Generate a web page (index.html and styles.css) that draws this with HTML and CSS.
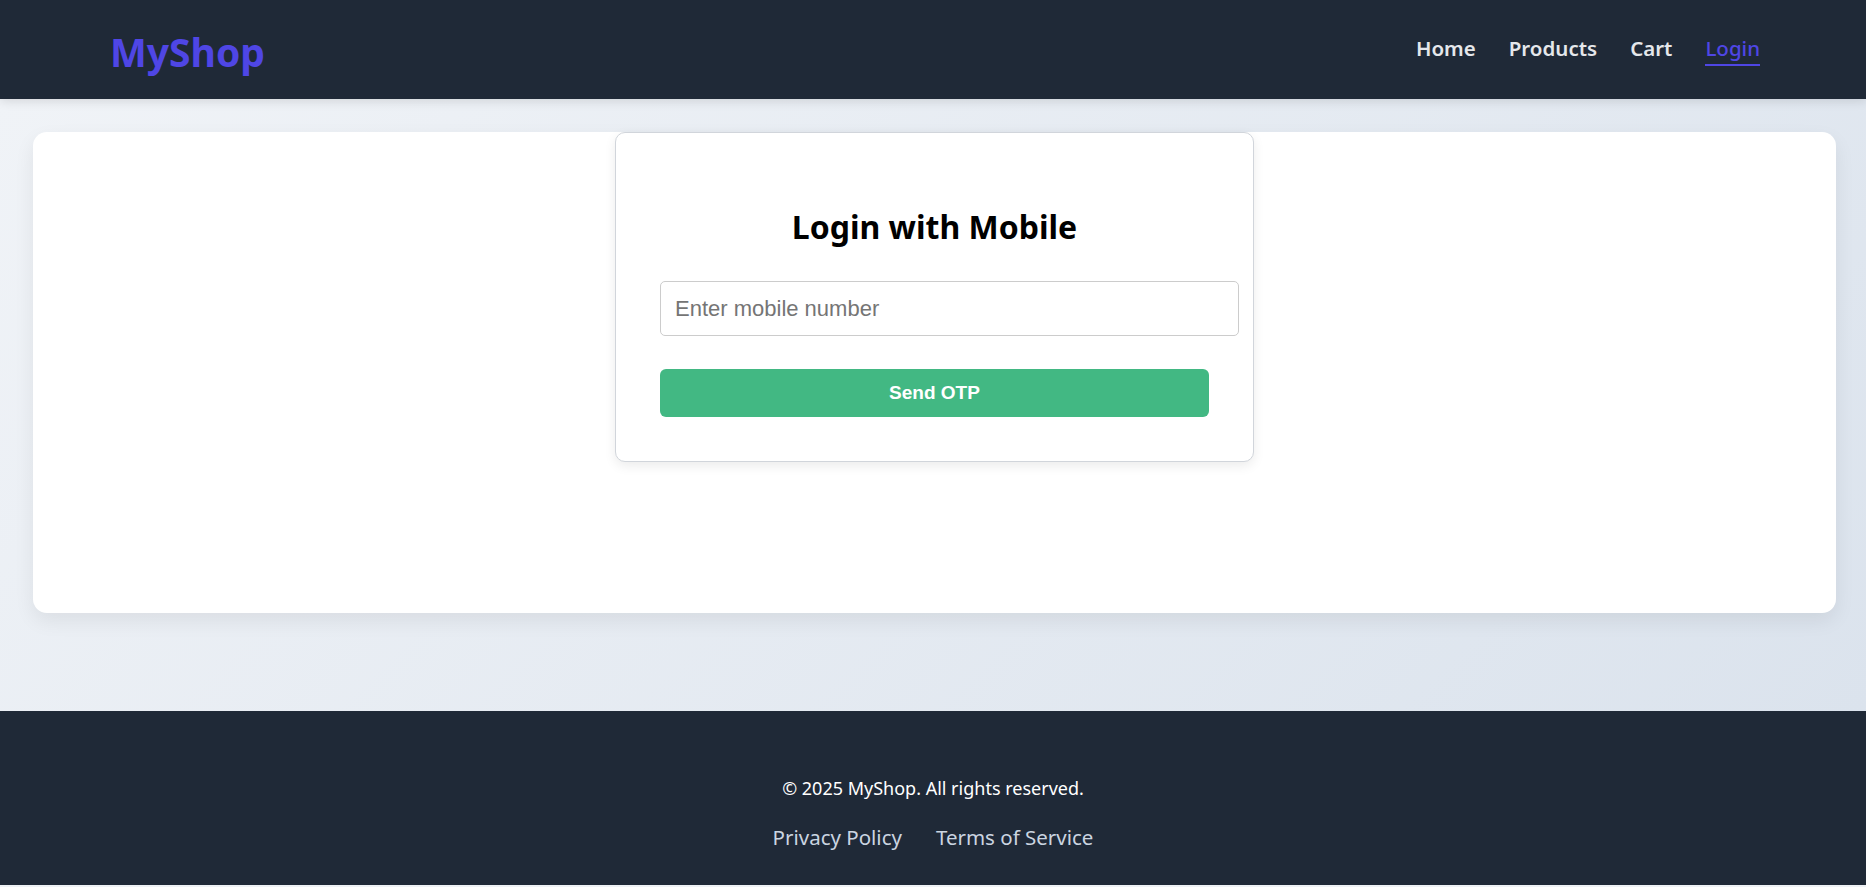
FILE: index.html
```html
<!DOCTYPE html>
<html lang="en">
<head>
<meta charset="utf-8">
<title>MyShop - Login</title>
<link rel="stylesheet" href="styles.css">
</head>
<body>
<header class="topbar">
  <div class="logo">MyShop</div>
  <nav class="nav">
    <a class="nav-link" href="#">Home</a>
    <a class="nav-link" href="#">Products</a>
    <a class="nav-link" href="#">Cart</a>
    <a class="nav-link active" href="#">Login</a>
  </nav>
</header>
<main class="main">
  <section class="panel">
    <div class="card">
      <h2 class="card-title">Login with Mobile</h2>
      <input class="phone-input" type="text" placeholder="Enter mobile number">
      <button class="otp-btn" type="button">Send OTP</button>
    </div>
  </section>
</main>
<footer class="footer">
  <p class="copy">© 2025 MyShop. All rights reserved.</p>
  <div class="footer-links">
    <a class="footer-link" href="#">Privacy Policy</a>
    <a class="footer-link" href="#">Terms of Service</a>
  </div>
</footer>
</body>
</html>
```
FILE: styles.css
```css
body {
  margin: 0;
  background: #eef1f5;
  font-family: "Noto Sans", "Open Sans", sans-serif;
}

.topbar {
  height: 99px;
  background: #1f2937;
  display: flex;
  align-items: center;
  justify-content: space-between;
  padding: 0 106px 0 110px;
  box-shadow: 0 2px 10px rgba(0, 0, 0, 0.12);
  position: relative;
  z-index: 1;
}

.logo {
  font-size: 39px;
  font-weight: 700;
  color: #4f46e5;
  line-height: 1;
  padding-top: 4px;
}

.nav {
  display: flex;
  gap: 33px;
  align-items: center;
}

.nav-link {
  color: #e5e7eb;
  text-decoration: none;
  font-size: 20.5px;
  font-weight: 600;
  padding-bottom: 2px;
  border-bottom: 2px solid transparent;
}

.nav-link.active {
  color: #4f46e5;
  font-weight: 500;
  border-bottom-color: #4f46e5;
}

.main {
  padding: 33px 30px 98px 33px;
  background: linear-gradient(135deg, #f0f3f7 0%, #dbe3ed 100%);
}

.panel {
  background: #fff;
  border-radius: 14px;
  height: 481px;
  box-shadow: 0 8px 20px rgba(0, 0, 0, 0.07);
  display: flex;
  justify-content: center;
  align-items: flex-start;
}

.card {
  width: 549px;
  padding: 44px;
  background: #fff;
  border: 1px solid #d1d5db;
  border-radius: 10px;
  box-shadow: 0 4px 12px rgba(0, 0, 0, 0.08);
}

.card-title {
  margin: 28px 0 32px;
  font-size: 32px;
  line-height: 44px;
  font-weight: 700;
  color: #000;
  text-align: center;
}

.phone-input {
  display: block;
  width: 100%;
  margin: 0;
  padding: 14px 14px 13px;
  font-family: "Liberation Sans", Arial, sans-serif;
  font-size: 22px;
  border: 1px solid #cccccc;
  border-radius: 5px;
  color: #333;
  outline: none;
}

.phone-input::placeholder {
  color: #757575;
}

.otp-btn {
  display: block;
  width: 100%;
  height: 48px;
  margin-top: 33px;
  border: none;
  border-radius: 6px;
  background: #42b883;
  color: #fff;
  font-family: "Liberation Sans", Arial, sans-serif;
  font-size: 19px;
  font-weight: 700;
}

.footer {
  background: #1f2937;
  padding: 64px 0 33px;
  text-align: center;
}

.copy {
  margin: 0 0 21px;
  font-size: 18px;
  line-height: 26px;
  color: #fff;
}

.footer-links {
  display: flex;
  justify-content: center;
  gap: 34px;
}

.footer-link {
  color: #cbd5e1;
  text-decoration: none;
  font-size: 20.5px;
  line-height: 30px;
}
```
